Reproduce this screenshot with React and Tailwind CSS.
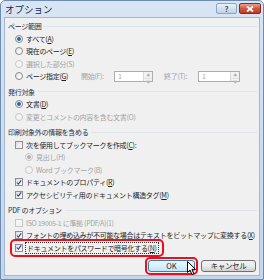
import { useState } from 'react';

const FONT = "font-['Noto_Sans_CJK_JP','Noto_Sans_CJK_SC',sans-serif]";

function Key({ k }) {
    return (
        <span>
            (<span className="underline">{k}</span>)
        </span>
    );
}

function Heading({ children, first }) {
    return (
        <div className={`flex items-center h-[12.5px] pl-[3px] pr-[2px] ${first ? '' : 'mt-[3px]'}`}>
            <span className="text-[#1d2f4d] shrink-0">{children}</span>
            <div className="flex-1 h-px bg-[#dce4ec] ml-[3px]" />
        </div>
    );
}

function Radio({ checked, disabled, indent, children }) {
    return (
        <div className={`flex items-center h-[12.5px] ${indent ? 'pl-[20px]' : 'pl-[10px]'}`}>
            <span
                className={`w-[8px] h-[8px] rounded-full border flex items-center justify-center shrink-0 ${
                    disabled ? 'border-[#c8c8c8] bg-[#f4f4f4]' : 'border-[#8a8a8a] bg-gradient-to-br from-[#e6e6e6] to-[#ffffff]'
                }`}
            >
                {checked && (
                    <span className={`w-[4px] h-[4px] rounded-full ${disabled ? 'bg-[#b0b0b0]' : 'bg-[#2468b8]'}`} />
                )}
            </span>
            <span className={`ml-[3px] whitespace-nowrap ${disabled ? 'text-[#a3a3a3]' : 'text-[#1e1e1e]'}`}>{children}</span>
        </div>
    );
}

function Check({ checked, disabled, children, focus }) {
    return (
        <div className="flex items-center h-[12.5px] pl-[10px]">
            <span
                className={`w-[8px] h-[8px] border flex items-center justify-center shrink-0 ${
                    disabled ? 'border-[#c8c8c8] bg-[#f4f4f4]' : 'border-[#8e8f8f] bg-gradient-to-br from-[#dcdcdc] to-[#ffffff]'
                }`}
            >
                {checked && (
                    <svg width="7" height="7" viewBox="0 0 7 7">
                        <path d="M1 3.5 L2.8 5.5 L6 1" fill="none" stroke="#2a3a8c" strokeWidth="1.3" />
                    </svg>
                )}
            </span>
            <span
                className={`ml-[3px] whitespace-nowrap ${disabled ? 'text-[#a3a3a3]' : 'text-[#1e1e1e]'} ${
                    focus ? 'outline outline-1 outline-dotted outline-[#333] px-px' : ''
                }`}
            >
                {children}
            </span>
        </div>
    );
}

function Spin({ w }) {
    return (
        <div className={`flex h-[11px] border border-[#abadb3] bg-white ${w}`}>
            <span className="flex-1 pl-[3px] text-[#a8a8a8] leading-[9px]">1</span>
            <div className="w-[9px] flex flex-col border-l border-[#d9d9d9] bg-[#f3f3f3]">
                <span className="flex-1 flex items-center justify-center text-[4px] text-[#b4b4b4] border-b border-[#e0e0e0]">▲</span>
                <span className="flex-1 flex items-center justify-center text-[4px] text-[#b4b4b4]">▼</span>
            </div>
        </div>
    );
}

export default function App() {
    const [all] = useState(true);

    return (
        <div className={`w-[264px] h-[280px] bg-gradient-to-b from-[#d7e5f5] to-[#c3d6ec] border border-[#6f8cb0] rounded-t-[5px] flex flex-col overflow-hidden ${FONT} text-[7px] tracking-[-0.3px]`}>
            {/* Title bar */}
            <div className="h-[16px] flex items-center justify-between pl-[4px] pr-[2px] shrink-0">
                <span className="text-[9.5px] text-[#1b2b40] tracking-normal">オプション</span>
                <div className="flex gap-[2px] mt-[-1px]">
                    <div className="w-[21px] h-[11px] rounded-[2px] border border-[#8ea4c0] bg-gradient-to-b from-[#eaf1f9] to-[#bfd1e6] flex items-center justify-center text-[8px] text-[#4a5d78] font-bold leading-none tracking-normal">
                        ?
                    </div>
                    <div className="w-[22px] h-[11px] rounded-[2px] border border-[#7a2e25] bg-gradient-to-b from-[#e8a393] via-[#d0573e] to-[#c23a22] flex items-center justify-center">
                        <svg width="8" height="6" viewBox="0 0 8 6">
                            <path d="M1 0.5 L7 5.5 M7 0.5 L1 5.5" stroke="#fff" strokeWidth="1.8" />
                        </svg>
                    </div>
                </div>
            </div>

            {/* Client area */}
            <div className="flex-1 mx-[3px] mb-[3px] bg-[#f0f0f0] border border-[#a5b7cc] pt-[2px] flex flex-col relative">
                <Heading first>ページ範囲</Heading>
                <Radio checked={all}>すべて<Key k="A" /></Radio>
                <Radio>現在のページ<Key k="E" /></Radio>
                <Radio disabled>選択した部分(S)</Radio>
                <div className="flex items-center h-[12.5px] pl-[10px]">
                    <span className="w-[8px] h-[8px] rounded-full border border-[#8a8a8a] bg-gradient-to-br from-[#e6e6e6] to-white shrink-0" />
                    <span className="ml-[3px] w-[55px] whitespace-nowrap text-[#1e1e1e]">ページ指定<Key k="G" /></span>
                    <span className="w-[33px] text-[#a3a3a3] whitespace-nowrap">開始(F):</span>
                    <Spin w="w-[39px]" />
                    <span className="ml-[11px] w-[34px] text-[#a3a3a3] whitespace-nowrap">終了(T):</span>
                    <Spin w="w-[42px]" />
                </div>

                <Heading>発行対象</Heading>
                <Radio checked>文書<Key k="D" /></Radio>
                <Radio disabled>変更とコメントの内容を含む文書(O)</Radio>

                <Heading>印刷対象外の情報を含める</Heading>
                <Check>次を使用してブックマークを作成<Key k="C" />:</Check>
                <Radio checked disabled indent>見出し(H)</Radio>
                <Radio disabled indent>Word ブックマーク(B)</Radio>
                <Check checked>ドキュメントのプロパティ<Key k="R" /></Check>
                <Check checked>アクセシビリティ用のドキュメント構造タグ<Key k="M" /></Check>

                <Heading>PDF のオプション</Heading>
                <Check disabled>ISO 19005-1 に準拠 (PDF/A)(1)</Check>
                <Check checked>フォントの埋め込みが不可能な場合はテキストをビットマップに変換する<Key k="X" /></Check>
                <div className="relative">
                    <Check checked focus>ドキュメントをパスワードで暗号化する<Key k="N" /></Check>
                    <div className="absolute left-[5px] top-[-3px] w-[154px] h-[18px] border-2 border-[#e8101a] rounded-[5px]" />
                </div>

                {/* Buttons */}
                <div className="flex items-center justify-end gap-[6px] pr-[3px] mt-[6px]">
                    <div className="relative w-[47px] h-[12px] rounded-[3px] border border-[#3c7fb1] bg-gradient-to-b from-[#eaf6fd] via-[#d9f0fc] to-[#bee6fd] flex items-center justify-center text-[#1e1e1e] text-[7.5px] tracking-normal">
                        OK
                        <div className="absolute -inset-[4px] border-2 border-[#e8101a] rounded-[5px]" />
                    </div>
                    <div className="w-[55px] h-[12px] rounded-[3px] border border-[#707070] bg-gradient-to-b from-[#f2f2f2] via-[#ebebeb] to-[#cfcfcf] flex items-center justify-center text-[#1e1e1e] text-[7.5px]">
                        キャンセル
                    </div>
                </div>

                {/* Mouse cursor */}
                <svg className="absolute left-[182px] top-[243px]" width="10" height="15" viewBox="0 0 10 15">
                    <path d="M0.5 0.5 L0.5 11.5 L3 9 L5 13.5 L6.8 12.7 L4.9 8.4 L8.5 8.4 Z" fill="#fff" stroke="#000" strokeWidth="1" strokeLinejoin="round" />
                </svg>
            </div>
        </div>
    );
}
